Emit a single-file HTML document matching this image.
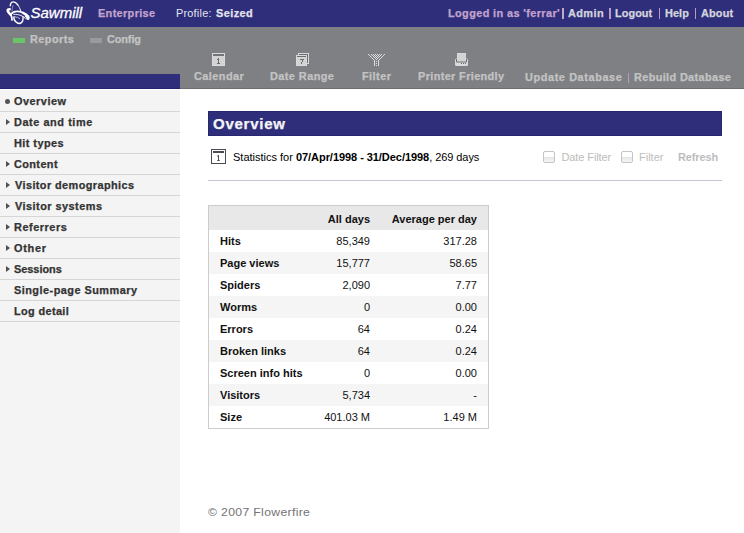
<!DOCTYPE html>
<html><head><meta charset="utf-8">
<style>
html,body{margin:0;padding:0;}
body{width:744px;height:533px;position:relative;overflow:hidden;background:#fff;font-family:"Liberation Sans",sans-serif;}
.a{position:absolute;white-space:nowrap;}
.t{position:absolute;white-space:nowrap;line-height:16px;font-family:"Liberation Sans",sans-serif;}
#top{left:0;top:0;width:744px;height:27px;background:#2f2e7a;}
#gray{left:0;top:27px;width:744px;height:62px;background:#7f8084;}
#strip{left:0;top:74px;width:180px;height:15px;background:#2f2e7a;}
#side{left:0;top:90px;width:180px;height:443px;background:#f4f4f4;}
.ln{position:absolute;left:0;width:180px;height:1px;background:#d6d6d6;}
.tri{position:absolute;left:5.8px;margin-top:-0.4px;width:0;height:0;border-left:4.6px solid #505050;border-top:3.9px solid transparent;border-bottom:3.9px solid transparent;}
table{position:absolute;left:208px;top:205px;width:281px;table-layout:fixed;border-collapse:separate;border-spacing:0;border:1px solid #ccc;font-size:11px;}
td,th{white-space:nowrap;height:22px;padding:0;line-height:14px;vertical-align:middle;color:#111;}
th{height:24px;background:#e8e8e8;text-align:right;font-weight:bold;padding-top:2px;box-sizing:border-box}
td.l{font-weight:bold;text-align:left;padding-left:11px;}
td.r,th.r{text-align:right;padding-right:11px;}
tr.o td{background:#f5f5f5;}
</style></head><body>
<div id="top" class="a"></div>
<div id="gray" class="a"></div>
<div class="a" style="left:0;top:88px;width:744px;height:1px;background:#6c6d71;"></div>
<div id="strip" class="a"></div>
<div class="a" style="left:0;top:88px;width:180px;height:1px;background:#252470;"></div>
<div id="side" class="a"></div>

<!-- logo -->
<svg class="a" style="left:0px;top:0px" width="32" height="27" viewBox="0 0 32 27">
<g fill="none" stroke="#fff" stroke-linecap="round" stroke-linejoin="round">
<path d="M10.3 5.8C10.4 3.6 11.6 1.9 13.4 1.9C15 1.9 16.6 3.2 17.8 4.8" stroke-width="1.4"/>
<path d="M17.8 4.8C19 6.6 20 8.6 20.5 10C20.7 10.8 20.8 11.4 20.8 11.8" stroke-width="0.9"/>
<path d="M9.6 9.2C8.4 9.2 7.6 9.8 7.7 10.8C7.9 12.2 9.4 13.4 10.8 14.8" stroke-width="2.6"/>
<path d="M10.8 14.8C11.6 16 12 18 12 20" stroke-width="1.7"/>
<path d="M11.8 13.4C13 12.2 14.8 11.4 17 11.4C19 11.4 21 11.9 23 12.8" stroke-width="1.7"/>
<path d="M23 12.8C25 13.6 27 15 28.2 16.6C28.6 17.3 28.5 18 28.2 18.6" stroke-width="2.5"/>
<path d="M25.5 16C26.5 17 27.2 18 27.2 19" stroke-width="1.6"/>
<path d="M13.8 14.4C16 14.2 18.5 14.6 21 15.5C23 16.3 24.6 17.4 25.5 18.6" stroke-width="1" stroke-opacity="0.9"/>
<path d="M14 16.8C13.6 18.8 14.4 20.6 15.8 21.8C17.2 23.2 19.2 23.8 20.8 23C22.4 22.2 23.3 20.2 23 17" stroke-width="1.4"/>
<path d="M15.4 16.8C17 17 18.5 17.6 19.6 18.5" stroke-width="0.8" stroke-opacity="0.8"/>
<path d="M13 5.4C12.3 7.5 12 10 12 12.4" stroke-width="0.8" stroke-opacity="0.55"/>
</g></svg>
<div class="a" id="sawmill" style="left:30.5px;top:2.8px;font-style:italic;font-size:15px;line-height:20px;color:#fff;letter-spacing:0px;-webkit-text-stroke:0.3px #fff;">Sawmill</div>

<!-- tab markers -->
<div class="a" style="left:13px;top:38px;width:12px;height:5px;background:#6cc468;"></div>
<div class="a" style="left:90px;top:38px;width:12px;height:5px;background:#9a9a9c;"></div>

<!-- toolbar icons -->
<svg class="a" style="left:212px;top:53px" width="13" height="13" viewBox="0 0 13 13" shape-rendering="crispEdges">
<rect x="0" y="0" width="13" height="13" fill="#dadada"/>
<rect x="1" y="1" width="11" height="11" fill="#d3d3d3"/>
<rect x="1" y="1" width="11" height="2" fill="#737478"/>
<rect x="1" y="2.6" width="11" height="0.4" fill="#dadada"/>
<path d="M6 5h1v5h1v1h-3v-1h1v-3h-1v-1h1z" fill="#6c6d71"/>
</svg>
<svg class="a" style="left:296px;top:53px" width="13" height="13" viewBox="0 0 13 13" shape-rendering="crispEdges">
<rect x="2" y="0" width="11" height="11" fill="#dadada"/>
<rect x="3" y="1" width="9" height="9" fill="#6c6d71"/>
<rect x="0" y="2" width="11" height="11" fill="#dadada"/>
<rect x="1" y="3" width="9" height="9" fill="#d3d3d3"/>
<rect x="1" y="3" width="9" height="1" fill="#6c6d71"/>
<path d="M4 6h4v1h-1v2h-1v2h-1v-2h1v-2h-2z" fill="#6c6d71"/>
</svg>
<svg class="a" style="left:366px;top:52px" width="21" height="15" viewBox="0 0 21 15" shape-rendering="crispEdges" fill="#dcdcdc">
<rect x="2" y="2" width="1" height="1"/><rect x="3" y="3" width="1" height="1"/><rect x="4" y="4" width="1" height="1"/><rect x="5" y="2" width="1" height="1"/><rect x="5" y="5" width="1" height="1"/><rect x="6" y="3" width="1" height="1"/><rect x="6" y="6" width="1" height="1"/><rect x="7" y="2" width="1" height="1"/><rect x="7" y="4" width="1" height="1"/><rect x="7" y="7" width="1" height="1"/><rect x="8" y="3" width="1" height="1"/><rect x="8" y="5" width="1" height="1"/><rect x="8" y="8" width="1" height="1"/><rect x="8" y="9" width="1" height="1"/><rect x="8" y="10" width="1" height="1"/><rect x="8" y="11" width="1" height="1"/><rect x="8" y="12" width="1" height="1"/><rect x="8" y="13" width="1" height="1"/><rect x="9" y="2" width="1" height="1"/><rect x="9" y="4" width="1" height="1"/><rect x="9" y="6" width="1" height="1"/><rect x="10" y="3" width="1" height="1"/><rect x="10" y="5" width="1" height="1"/><rect x="10" y="7" width="1" height="1"/><rect x="10" y="9" width="1" height="1"/><rect x="10" y="11" width="1" height="1"/><rect x="10" y="13" width="1" height="1"/><rect x="11" y="2" width="1" height="1"/><rect x="11" y="4" width="1" height="1"/><rect x="11" y="6" width="1" height="1"/><rect x="12" y="3" width="1" height="1"/><rect x="12" y="5" width="1" height="1"/><rect x="12" y="8" width="1" height="1"/><rect x="12" y="9" width="1" height="1"/><rect x="12" y="10" width="1" height="1"/><rect x="12" y="11" width="1" height="1"/><rect x="12" y="12" width="1" height="1"/><rect x="12" y="13" width="1" height="1"/><rect x="13" y="2" width="1" height="1"/><rect x="13" y="4" width="1" height="1"/><rect x="13" y="7" width="1" height="1"/><rect x="14" y="3" width="1" height="1"/><rect x="14" y="6" width="1" height="1"/><rect x="15" y="2" width="1" height="1"/><rect x="15" y="5" width="1" height="1"/><rect x="16" y="4" width="1" height="1"/><rect x="17" y="3" width="1" height="1"/><rect x="18" y="2" width="1" height="1"/>
</svg>
<svg class="a" style="left:454px;top:52px" width="15" height="15" viewBox="0 0 15 15">
<rect x="1" y="6.5" width="13" height="7.5" rx="1.5" fill="#dadada"/>
<path d="M2.5 7v3h10v-3" fill="none" stroke="#6c6d71" stroke-width="1"/>
<rect x="3" y="1" width="9" height="8" fill="#dadada"/>
<rect x="3.7" y="1.7" width="7.6" height="7.3" fill="#d3d3d3"/>
<rect x="7" y="11" width="1" height="1" fill="#6c6d71"/><rect x="9" y="11" width="1" height="1" fill="#6c6d71"/><rect x="11" y="11" width="1" height="1" fill="#6c6d71"/>
</svg>

<!-- sidebar lines and markers -->
<div class="ln" style="top:111px"></div><div class="ln" style="top:132px"></div><div class="ln" style="top:153px"></div>
<div class="ln" style="top:174px"></div><div class="ln" style="top:195px"></div><div class="ln" style="top:216px"></div>
<div class="ln" style="top:237px"></div><div class="ln" style="top:258px"></div><div class="ln" style="top:279px"></div>
<div class="ln" style="top:300px"></div><div class="ln" style="top:321px"></div>
<div class="a" style="left:5px;top:99px;width:5px;height:5px;border-radius:3px;background:#555;"></div>
<div class="tri" style="top:119px"></div>
<div class="tri" style="top:161px"></div>
<div class="tri" style="top:182px"></div>
<div class="tri" style="top:203px"></div>
<div class="tri" style="top:224px"></div>
<div class="tri" style="top:245px"></div>
<div class="tri" style="top:266px"></div>

<!-- main -->
<div class="a" style="left:208px;top:111px;width:514px;height:25px;background:#2f2e7a;box-sizing:border-box;border:1px solid #272670;"></div>
<svg class="a" style="left:211px;top:149px" width="15" height="15" viewBox="0 0 15 15">
<rect x="0.5" y="0.5" width="14" height="14" fill="#fff" stroke="#4a4a50"/>
<rect x="2" y="2" width="11" height="2" fill="#4a4a50"/>
<path d="M7 6h1v5.2h1v0.8h-3v-0.8h1v-3.6h-1v-0.8l1-0.3z" fill="#4a4a50"/>
</svg>
<div class="a" id="stats" style="left:233px;top:150px;font-size:11px;line-height:14px;color:#000;">Statistics for <b style="letter-spacing:-0.055px">07/Apr/1998 - 31/Dec/1998</b><span style="letter-spacing:-0.06px">, 269 days</span></div>
<div class="a" style="left:208px;top:180px;width:514px;height:1px;background:#c9c3d2;"></div>
<div class="a" style="left:543px;top:151px;width:10px;height:10px;border:1px solid #c4c4c4;border-radius:2px;background:linear-gradient(#fff 45%,#e6e6e6 55%,#f6f6f6);"></div>
<div class="a" id="df" style="left:561.5px;top:150px;font-size:11px;line-height:14px;color:#bcbcbc;letter-spacing:-0.1px">Date Filter</div>
<div class="a" style="left:621px;top:151px;width:10px;height:10px;border:1px solid #c4c4c4;border-radius:2px;background:linear-gradient(#fff 45%,#e6e6e6 55%,#f6f6f6);"></div>
<div class="a" id="ff" style="left:639px;top:150px;font-size:11px;line-height:14px;color:#bcbcbc;">Filter</div>
<div class="a" id="rf" style="left:678px;top:150px;font-size:11px;line-height:14px;color:#bcbcbc;font-weight:bold;letter-spacing:-0.12px">Refresh</div>

<table>
<tr><th style="width:100px"></th><th class="r" style="width:72px">All days</th><th class="r" style="width:107px">Average per day</th></tr>
<tr><td class="l">Hits</td><td class="r">85,349</td><td class="r">317.28</td></tr>
<tr class="o"><td class="l">Page views</td><td class="r">15,777</td><td class="r">58.65</td></tr>
<tr><td class="l">Spiders</td><td class="r">2,090</td><td class="r">7.77</td></tr>
<tr class="o"><td class="l">Worms</td><td class="r">0</td><td class="r">0.00</td></tr>
<tr><td class="l">Errors</td><td class="r">64</td><td class="r">0.24</td></tr>
<tr class="o"><td class="l">Broken links</td><td class="r">64</td><td class="r">0.24</td></tr>
<tr><td class="l">Screen info hits</td><td class="r">0</td><td class="r">0.00</td></tr>
<tr class="o"><td class="l">Visitors</td><td class="r">5,734</td><td class="r">-</td></tr>
<tr><td class="l">Size</td><td class="r">401.03 M</td><td class="r">1.49 M</td></tr>
</table>

<!-- pipes -->
<div class="a" style="left:562.45px;top:7.5px;width:1.5px;height:11.5px;background:#c0a8cd;"></div>
<div class="a" style="left:609.05px;top:7.5px;width:1.5px;height:11.5px;background:#ba9bc7;"></div>
<div class="a" style="left:658.95px;top:7.5px;width:1.5px;height:11.5px;background:#ba9bc7;"></div>
<div class="a" style="left:694.75px;top:7.5px;width:1.5px;height:11.5px;background:#ba9bc7;"></div>
<div class="a" style="left:627.85px;top:72.5px;width:1.5px;height:10px;background:#ba9bc7;"></div>

<div class="t" id="ent" style="left:97.65px;top:6.00px;font-size:10.10px;font-weight:bold;color:#c2a3cd;letter-spacing:0.325px;transform:scaleX(1.08);transform-origin:0 0;-webkit-text-stroke:0.25px #c2a3cd;">Enterprise</div>
<div class="t" id="prof" style="left:176.45px;top:6.00px;font-size:10.10px;font-weight:normal;color:#e4e4ee;letter-spacing:0.204px;transform:scaleX(1.08);transform-origin:0 0;">Profile:</div>
<div class="t" id="seized" style="left:215.65px;top:6.00px;font-size:10.10px;font-weight:bold;color:#e4e4ee;letter-spacing:0.416px;transform:scaleX(1.08);transform-origin:0 0;-webkit-text-stroke:0.25px #e4e4ee;">Seized</div>
<div class="t" id="logged" style="left:447.85px;top:6.00px;font-size:10.10px;font-weight:bold;color:#c2a3cd;letter-spacing:0.357px;transform:scaleX(1.08);transform-origin:0 0;-webkit-text-stroke:0.25px #c2a3cd;">Logged in as 'ferrar'</div>
<div class="t" id="adm" style="left:568.45px;top:6.00px;font-size:10.10px;font-weight:bold;color:#d4d4de;letter-spacing:0.386px;transform:scaleX(1.08);transform-origin:0 0;-webkit-text-stroke:0.25px #d4d4de;">Admin</div>
<div class="t" id="lo" style="left:614.85px;top:6.00px;font-size:10.10px;font-weight:bold;color:#d4d4de;letter-spacing:0.053px;transform:scaleX(1.08);transform-origin:0 0;-webkit-text-stroke:0.25px #d4d4de;">Logout</div>
<div class="t" id="help" style="left:665.05px;top:6.00px;font-size:10.10px;font-weight:bold;color:#d4d4de;letter-spacing:0.079px;transform:scaleX(1.08);transform-origin:0 0;-webkit-text-stroke:0.25px #d4d4de;">Help</div>
<div class="t" id="about" style="left:701.05px;top:6.00px;font-size:10.10px;font-weight:bold;color:#d4d4de;letter-spacing:0.146px;transform:scaleX(1.08);transform-origin:0 0;-webkit-text-stroke:0.25px #d4d4de;">About</div>
<div class="t" id="reports" style="left:29.65px;top:32.00px;font-size:10.10px;font-weight:bold;color:#c3c3c3;letter-spacing:0.416px;transform:scaleX(1.08);transform-origin:0 0;-webkit-text-stroke:0.25px #c3c3c3;">Reports</div>
<div class="t" id="config" style="left:106.65px;top:32.00px;font-size:10.10px;font-weight:bold;color:#c3c3c3;letter-spacing:-0.098px;transform:scaleX(1.08);transform-origin:0 0;-webkit-text-stroke:0.25px #c3c3c3;">Config</div>
<div class="t" id="cal" style="left:194.05px;top:68.50px;font-size:10.10px;font-weight:bold;color:#c3c3c3;letter-spacing:0.406px;transform:scaleX(1.08);transform-origin:0 0;-webkit-text-stroke:0.25px #c3c3c3;">Calendar</div>
<div class="t" id="dr" style="left:270.05px;top:68.50px;font-size:10.10px;font-weight:bold;color:#c3c3c3;letter-spacing:0.402px;transform:scaleX(1.08);transform-origin:0 0;-webkit-text-stroke:0.25px #c3c3c3;">Date Range</div>
<div class="t" id="fil" style="left:361.65px;top:68.50px;font-size:10.10px;font-weight:bold;color:#c3c3c3;letter-spacing:0.420px;transform:scaleX(1.08);transform-origin:0 0;-webkit-text-stroke:0.25px #c3c3c3;">Filter</div>
<div class="t" id="pf" style="left:418.25px;top:68.50px;font-size:10.10px;font-weight:bold;color:#c3c3c3;letter-spacing:0.340px;transform:scaleX(1.08);transform-origin:0 0;-webkit-text-stroke:0.25px #c3c3c3;">Printer Friendly</div>
<div class="t" id="ud" style="left:525.05px;top:69.50px;font-size:10.10px;font-weight:bold;color:#c3c3c3;letter-spacing:0.551px;transform:scaleX(1.08);transform-origin:0 0;-webkit-text-stroke:0.25px #c3c3c3;">Update Database</div>
<div class="t" id="rd" style="left:634.05px;top:69.50px;font-size:10.10px;font-weight:bold;color:#c3c3c3;letter-spacing:0.334px;transform:scaleX(1.08);transform-origin:0 0;-webkit-text-stroke:0.25px #c3c3c3;">Rebuild Database</div>
<div class="t" id="ovh" style="left:213.45px;top:116.48px;font-size:13.90px;font-weight:bold;color:#f4f4f6;letter-spacing:0.684px;transform:scaleX(1.08);transform-origin:0 0;-webkit-text-stroke:0.25px #f4f4f6;">Overview</div>
<div class="t" id="copy" style="left:208.25px;top:504.38px;font-size:11.30px;font-weight:normal;color:#737377;letter-spacing:0.315px;transform:scaleX(1.08);transform-origin:0 0;">© 2007 Flowerfire</div>
<div class="t" id="s0" style="left:14.45px;top:93.50px;font-size:10.10px;font-weight:bold;color:#333333;letter-spacing:0.457px;transform:scaleX(1.08);transform-origin:0 0;-webkit-text-stroke:0.25px #333333;">Overview</div>
<div class="t" id="s1" style="left:14.45px;top:114.50px;font-size:10.10px;font-weight:bold;color:#333333;letter-spacing:0.525px;transform:scaleX(1.08);transform-origin:0 0;-webkit-text-stroke:0.25px #333333;">Date and time</div>
<div class="t" id="s2" style="left:14.45px;top:135.50px;font-size:10.10px;font-weight:bold;color:#333333;letter-spacing:0.410px;transform:scaleX(1.08);transform-origin:0 0;-webkit-text-stroke:0.25px #333333;">Hit types</div>
<div class="t" id="s3" style="left:14.45px;top:156.50px;font-size:10.10px;font-weight:bold;color:#333333;letter-spacing:0.361px;transform:scaleX(1.08);transform-origin:0 0;-webkit-text-stroke:0.25px #333333;">Content</div>
<div class="t" id="s4" style="left:14.75px;top:177.50px;font-size:10.10px;font-weight:bold;color:#333333;letter-spacing:0.376px;transform:scaleX(1.08);transform-origin:0 0;-webkit-text-stroke:0.25px #333333;">Visitor demographics</div>
<div class="t" id="s5" style="left:14.75px;top:198.50px;font-size:10.10px;font-weight:bold;color:#333333;letter-spacing:0.436px;transform:scaleX(1.08);transform-origin:0 0;-webkit-text-stroke:0.25px #333333;">Visitor systems</div>
<div class="t" id="s6" style="left:14.45px;top:219.50px;font-size:10.10px;font-weight:bold;color:#333333;letter-spacing:0.498px;transform:scaleX(1.08);transform-origin:0 0;-webkit-text-stroke:0.25px #333333;">Referrers</div>
<div class="t" id="s7" style="left:14.45px;top:240.50px;font-size:10.10px;font-weight:bold;color:#333333;letter-spacing:0.659px;transform:scaleX(1.08);transform-origin:0 0;-webkit-text-stroke:0.25px #333333;">Other</div>
<div class="t" id="s8" style="left:14.45px;top:261.50px;font-size:10.10px;font-weight:bold;color:#333333;letter-spacing:-0.011px;transform:scaleX(1.08);transform-origin:0 0;-webkit-text-stroke:0.25px #333333;">Sessions</div>
<div class="t" id="s9" style="left:14.45px;top:282.50px;font-size:10.10px;font-weight:bold;color:#333333;letter-spacing:0.437px;transform:scaleX(1.08);transform-origin:0 0;-webkit-text-stroke:0.25px #333333;">Single-page Summary</div>
<div class="t" id="s10" style="left:14.45px;top:303.50px;font-size:10.10px;font-weight:bold;color:#333333;letter-spacing:0.341px;transform:scaleX(1.08);transform-origin:0 0;-webkit-text-stroke:0.25px #333333;">Log detail</div>
</body></html>
